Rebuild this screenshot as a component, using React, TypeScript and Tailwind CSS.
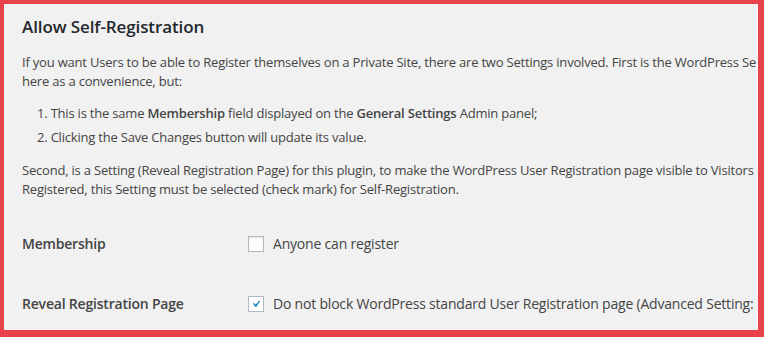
export default function App() {
    return (
        <div className="w-[764px] h-[337px] bg-[#e8434a] pl-[4px] pt-[4px] pr-[6px] pb-[7px] font-['Open_Sans',sans-serif]">
            <div className="h-full bg-[#f1f1f1] overflow-hidden text-[#444] text-[13px] leading-[19px] tracking-[-0.2px]">
                <div className="w-[1000px] pl-[18px]">
                    <h2 className="pt-[11px] text-[17px] leading-[24px] font-semibold text-[#23282d] tracking-[-0.1px]">
                        Allow Self-Registration
                    </h2>

                    <p className="mt-[14px] whitespace-nowrap">
                        If you want Users to be able to Register themselves on a Private Site, there are two Settings involved. First is the WordPress Se
                        <br />
                        here as a convenience, but:
                    </p>

                    <ol className="mt-[13px] ml-[15px] space-y-[5px] whitespace-nowrap">
                        <li>1. This is the same <b className="font-semibold">Membership</b> field displayed on the <b className="font-semibold">General Settings</b> Admin panel;</li>
                        <li>2. Clicking the Save Changes button will update its value.</li>
                    </ol>

                    <p className="mt-[14px] whitespace-nowrap">
                        Second, is a Setting (Reveal Registration Page) for this plugin, to make the WordPress User Registration page visible to Visitors
                        <br />
                        Registered, this Setting must be selected (check mark) for Self-Registration.
                    </p>

                    {/* Settings table */}
                    <div className="mt-[35px] flex items-center h-[19px] text-[14px]">
                        <div className="w-[226px] font-semibold">Membership</div>
                        <label className="flex items-center gap-[9px] whitespace-nowrap">
                            <span className="w-[16px] h-[16px] border border-[#b4b9be] bg-white shadow-[inset_0_1px_2px_rgba(0,0,0,0.1)]" />
                            Anyone can register
                        </label>
                    </div>

                    <div className="mt-[41px] flex items-center h-[19px] text-[14px]">
                        <div className="w-[226px] font-semibold">Reveal Registration Page</div>
                        <label className="flex items-center gap-[9px] whitespace-nowrap">
                            <span className="w-[16px] h-[16px] border border-[#b4b9be] bg-white flex items-center justify-center">
                                <svg viewBox="0 0 20 20" className="w-[20px] h-[20px]">
                                    <path d="M14.83 4.89l1.34.94-5.81 8.38H9.02L5.78 9.67l1.34-1.25 2.57 2.4z" fill="#1e8cbe" />
                                </svg>
                            </span>
                            Do not block WordPress standard User Registration page (Advanced Setting:
                        </label>
                    </div>
                </div>
            </div>
        </div>
    );
}
